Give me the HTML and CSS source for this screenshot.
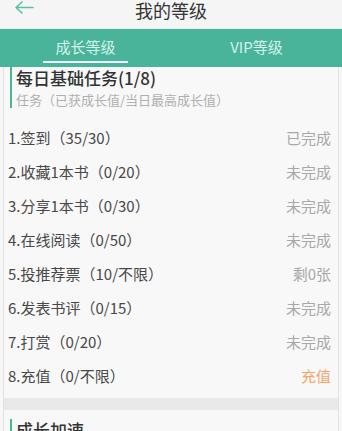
FILE: index.html
```html
<!DOCTYPE html>
<html lang="zh">
<head>
<meta charset="utf-8">
<link rel="stylesheet" href="styles.css">
</head>
<body>
<div class="topbar">
  <svg class="back" width="20" height="14" viewBox="0 0 20 14"><path d="M19 6.5H2M8 1L2 6.5L8 12" fill="none" stroke="#5bbfa6" stroke-width="1.6" stroke-linecap="round" stroke-linejoin="round"/></svg>
  <div class="title">我的等级</div>
</div>
<div class="tabs">
  <div class="tab active"><span>成长等级</span></div>
  <div class="tab"><span>VIP等级</span></div>
</div>
<div class="card">
  <div class="sec-head">
    <div class="sec-title">每日基础任务(1/8)</div>
    <div class="sec-sub">任务（已获成长值/当日最高成长值）</div>
  </div>
  <div class="rows">
    <div class="row"><span>1.签到（35/30）</span><span class="st">已完成</span></div>
    <div class="row"><span>2.收藏1本书（0/20）</span><span class="st">未完成</span></div>
    <div class="row"><span>3.分享1本书（0/30）</span><span class="st">未完成</span></div>
    <div class="row"><span>4.在线阅读（0/50）</span><span class="st">未完成</span></div>
    <div class="row"><span>5.投推荐票（10/不限）</span><span class="st">剩0张</span></div>
    <div class="row"><span>6.发表书评（0/15）</span><span class="st">未完成</span></div>
    <div class="row"><span>7.打赏（0/20）</span><span class="st">未完成</span></div>
    <div class="row"><span>8.充值（0/不限）</span><span class="st orange">充值</span></div>
  </div>
  <div class="band"></div>
  <div class="sec-head sec2">
    <div class="sec-title">成长加速</div>
  </div>
</div>
</body>
</html>
```
FILE: styles.css
```css
html, body {
  margin: 0;
  padding: 0;
}
body {
  width: 342px;
  height: 431px;
  overflow: hidden;
  background: #f7f7f7;
  font-family: "Noto Sans CJK SC", "Noto Sans", sans-serif;
}
.topbar {
  position: relative;
  height: 28px;
  background: #f5f5f5;
  border-bottom: 1px solid #e4f0ec;
}
.back {
  position: absolute;
  left: 14px;
  top: 1px;
}
.title {
  text-align: center;
  font-size: 18px;
  line-height: 20px;
  color: #333;
  padding-top: 0;
}
.tabs {
  display: flex;
  height: 38px;
  background: #4ab49b;
}
.tab {
  flex: 1;
  display: flex;
  justify-content: center;
  align-items: center;
  position: relative;
  font-size: 15px;
  color: #d4f2e9;
}
.tab span {
  margin-top: -4px;
}
.tab.active::after {
  content: "";
  position: absolute;
  left: 43px;
  width: 85px;
  bottom: 4px;
  height: 2px;
  background: #f2fbf8;
}
.card {
  margin: 0 3px;
  border-left: 1px solid #e2e2e2;
  border-right: 1px solid #e2e2e2;
  background: #f8f8f8;
  height: 400px;
}
.sec-head {
  margin-left: 6px;
  border-left: 2px solid #4ab49b;
  padding-left: 4px;
  height: 41px;
}
.sec-title {
  font-size: 17px;
  line-height: 21px;
  color: #333;
  font-weight: 500;
}
.sec-sub {
  font-size: 13px;
  line-height: 14px;
  color: #b0b0b0;
  margin-top: 5px;
  white-space: nowrap;
}
.rows {
  padding: 12px 7px 0 4px;
}
.row {
  display: flex;
  justify-content: space-between;
  align-items: center;
  height: 34px;
  font-size: 15px;
  color: #484848;
}
.st {
  color: #a8a8a8;
}
.st.orange {
  color: #f4a564;
}
.band {
  margin-top: 6px;
  height: 12px;
  background: #e9e9e9;
}
.sec2 {
  margin-top: 9px;
}
```
